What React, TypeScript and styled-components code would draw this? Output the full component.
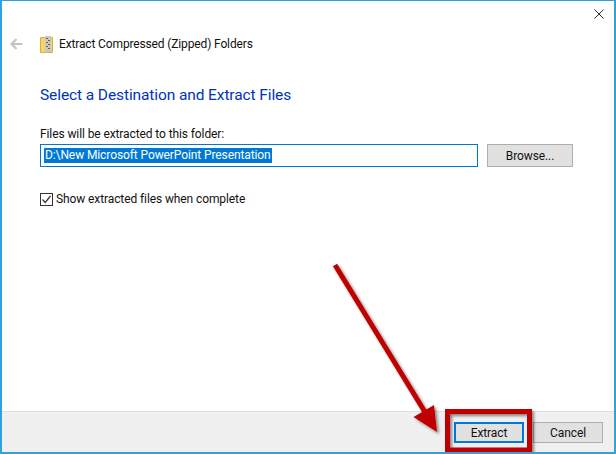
import React from 'react'
import styled, { createGlobalStyle } from 'styled-components'

const GlobalStyle = createGlobalStyle`
    html, body {
        margin: 0;
        padding: 0;
        background: #fff;
    }
    * {
        box-sizing: border-box;
    }
`

const FONT = `Roboto, "Noto Sans", "Liberation Sans", sans-serif`

export default function App() {
    return (
        <>
            <GlobalStyle />
            <Window>
                <CloseRow>
                    <CloseIcon viewBox="0 0 12 12">
                        <path d="M0.5 0.5 L10.5 10.5 M10.5 0.5 L0.5 10.5" stroke="#111" strokeWidth="1" fill="none" />
                    </CloseIcon>
                </CloseRow>
                <Header>
                    <BackIcon viewBox="0 0 13 12">
                        <path d="M12.5 6 H2 M6.5 1 L1.5 6 L6.5 11" stroke="#c4c4c4" strokeWidth="2.2" fill="none" />
                    </BackIcon>
                    <ZipIcon viewBox="0 0 13 17">
                        <path d="M0.5 1.5 H12.5 V16.5 H0.5 Z" fill="#f6d268" stroke="#dcae3c" strokeWidth="1" />
                        <rect x="5" y="0" width="6" height="16" fill="#c9c9c4" />
                        <path d="M6 2 h2 v1 h-2 Z M8 4 h2 v1 h-2 Z M6 6 h2 v1 h-2 Z M8 8 h2 v1 h-2 Z M6 10 h2 v1 h-2 Z M8 12 h2 v1 h-2 Z" fill="#5f5f5f" />
                    </ZipIcon>
                    <WizardTitle>Extract Compressed (Zipped) Folders</WizardTitle>
                </Header>
                <Content>
                    <Heading>Select a Destination and Extract Files</Heading>
                    <FieldLabel>Files will be extracted to this folder:</FieldLabel>
                    <PathRow>
                        <PathBox>
                            <Selected>D:\New Microsoft PowerPoint Presentation</Selected>
                        </PathBox>
                        <Button $width={86} $height={23}>Browse...</Button>
                    </PathRow>
                    <CheckRow>
                        <CheckBox viewBox="0 0 13 13">
                            <rect x="0.5" y="0.5" width="12" height="12" fill="#fff" stroke="#333" />
                            <path d="M2.5 6.5 L5.2 9.5 L10.5 3" stroke="#333" strokeWidth="1.2" fill="none" />
                        </CheckBox>
                        <span>Show extracted files when complete</span>
                    </CheckRow>
                </Content>
                <Footer>
                    <Button $width={70} $height={21} $primary>Extract</Button>
                    <Button $width={70} $height={21}>Cancel</Button>
                </Footer>
                <Callout viewBox="0 0 616 454">
                    <defs>
                        <filter id="shade" x="-20%" y="-20%" width="140%" height="140%">
                            <feDropShadow dx="2" dy="2" stdDeviation="1.5" floodColor="#000" floodOpacity="0.45" />
                        </filter>
                    </defs>
                    <g filter="url(#shade)">
                        <path d="M335 265 L428 417" stroke="#c00000" strokeWidth="5" fill="none" />
                        <path d="M413.5 417 L434 405 L437 432 Z" fill="#c00000" />
                    </g>
                    <rect x="447.5" y="411.5" width="82" height="38.5" fill="none" stroke="#c00000" strokeWidth="5" filter="url(#shade)" />
                </Callout>
            </Window>
        </>
    )
}

const Window = styled.div`
    position: relative;
    width: 616px;
    height: 454px;
    display: flex;
    flex-direction: column;
    background: #fff;
    border: solid #2ea3dd;
    border-width: 1px 2px 2px 2px;
    font-family: ${FONT};
    font-size: 12px;
    letter-spacing: -0.1px;
    color: #111;
    overflow: hidden;
`

const CloseRow = styled.div`
    height: 8px;
    position: relative;
`

const CloseIcon = styled.svg`
    position: absolute;
    top: 8px;
    right: 9px;
    width: 11px;
    height: 11px;
`

const Header = styled.div`
    display: flex;
    align-items: center;
    height: 24px;
    margin-top: 23px;
    padding-left: 8px;
`

const BackIcon = styled.svg`
    width: 13px;
    height: 12px;
    margin-right: 17px;
`

const ZipIcon = styled.svg`
    width: 13px;
    height: 17px;
    margin-right: 6px;
`

const WizardTitle = styled.span`
    font-size: 12px;
    letter-spacing: -0.14px;
`

const Content = styled.div`
    flex: 1;
    padding: 0 0 0 38px;
`

const Heading = styled.div`
    margin-top: 28px;
    font-size: 15.5px;
    line-height: 22px;
    color: #0033bc;
`

const FieldLabel = styled.div`
    margin-top: 20px;
    line-height: 16px;
`

const PathRow = styled.div`
    display: flex;
    align-items: center;
    gap: 9px;
    margin-top: 2px;
`

const PathBox = styled.div`
    width: 438px;
    height: 23px;
    border: 1px solid #0078d7;
    padding: 3px;
    display: flex;
    align-items: stretch;
`

const Selected = styled.span`
    background: #0078d7;
    color: #fff;
    line-height: 15px;
    padding: 0 1px;
`

const Button = styled.div<{ $width: number; $height: number; $primary?: boolean }>`
    width: ${p => p.$width}px;
    height: ${p => p.$height}px;
    display: flex;
    align-items: center;
    justify-content: center;
    background: #e1e1e1;
    border: ${p => (p.$primary ? '2px solid #0078d7' : '1px solid #adadad')};
    color: #111;
`

const CheckRow = styled.div`
    display: flex;
    align-items: center;
    gap: 3px;
    margin-top: 24px;
    height: 16px;
`

const CheckBox = styled.svg`
    width: 13px;
    height: 13px;
`

const Footer = styled.div`
    display: flex;
    justify-content: flex-end;
    gap: 9px;
    height: 41px;
    padding: 10px 11px 0 0;
    background: #f0f0f0;
    border-top: 1px solid #dfdfdf;
`

const Callout = styled.svg`
    position: absolute;
    left: -2px;
    top: -1px;
    width: 616px;
    height: 454px;
    pointer-events: none;
`
